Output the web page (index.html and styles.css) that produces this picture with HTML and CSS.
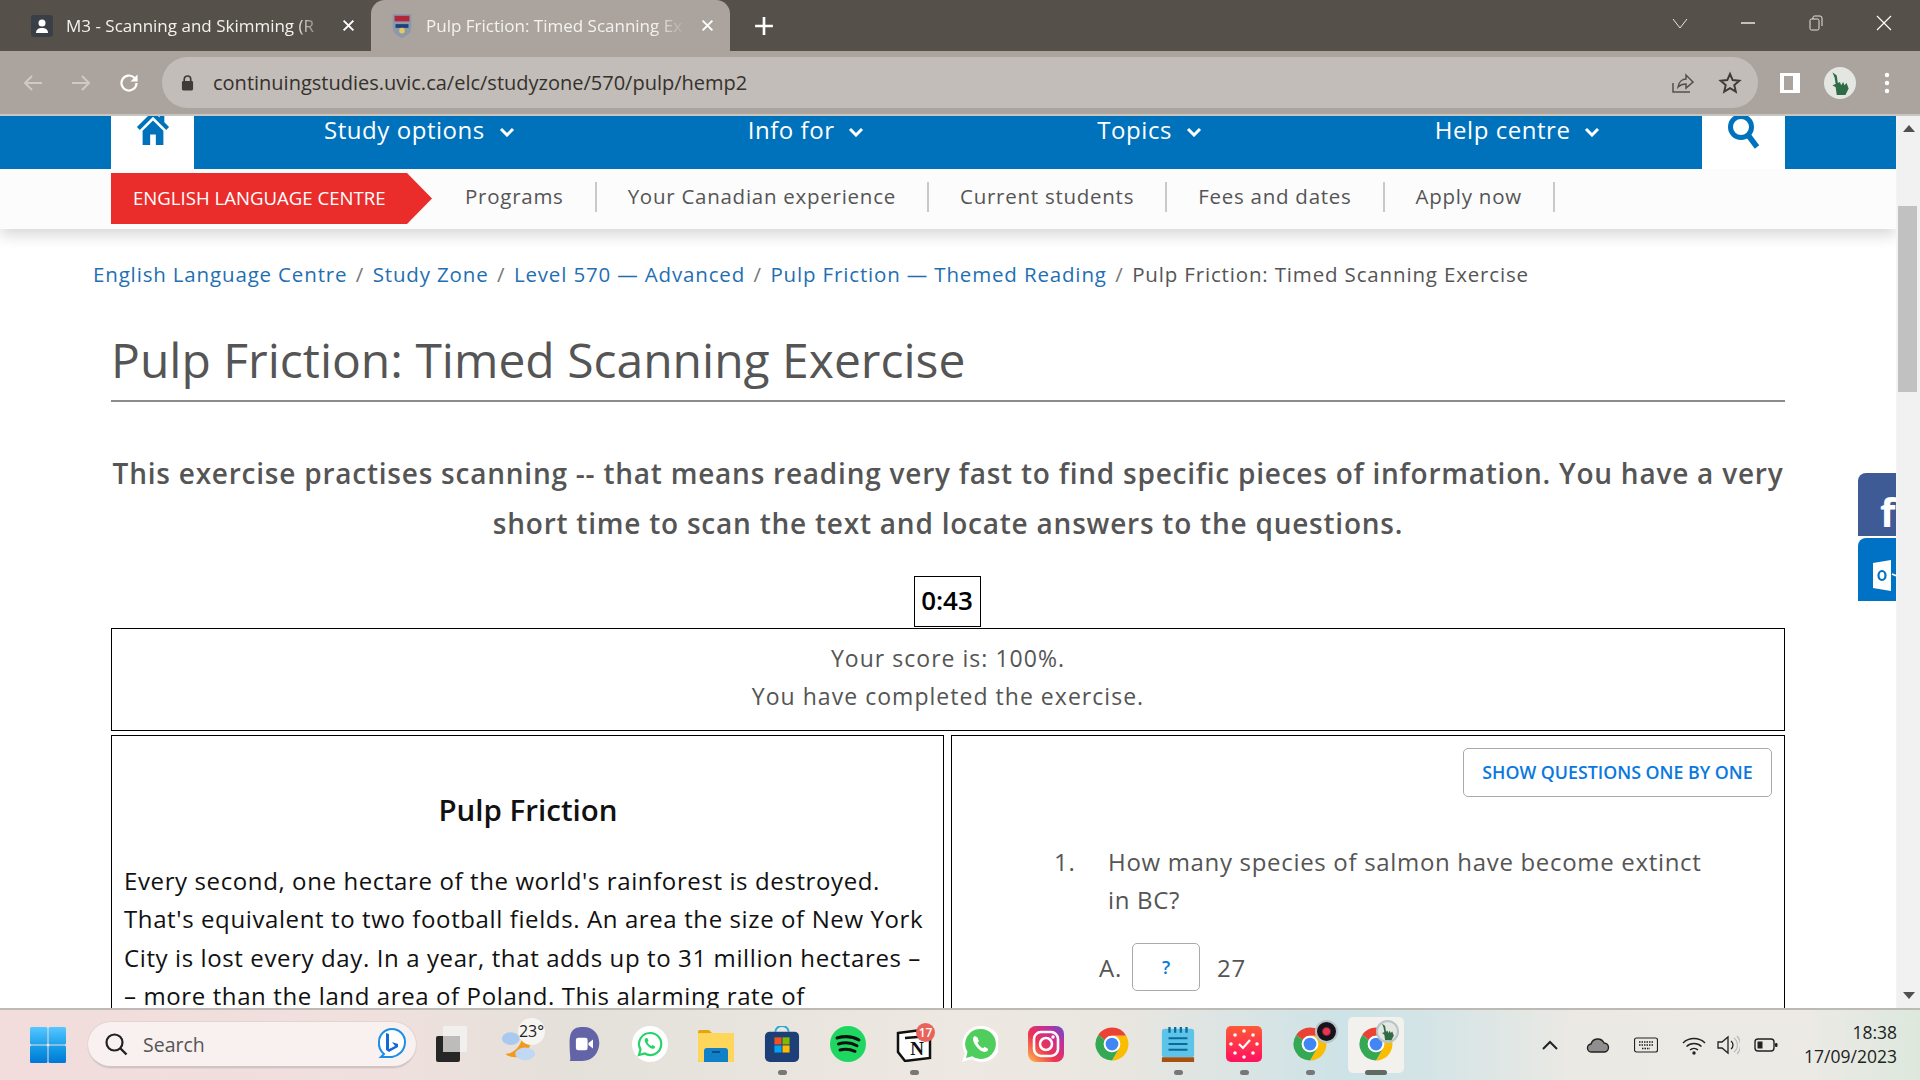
FILE: index.html
```html
<!DOCTYPE html>
<html lang="en">
<head>
<meta charset="utf-8">
<title>Pulp Friction: Timed Scanning Exercise</title>
<link rel="stylesheet" href="styles.css">
</head>
<body>
<svg class="defs" width="0" height="0" aria-hidden="true">
  <symbol id="chrome" viewBox="0 0 48 48">
    <path fill="#ea4335" d="M24 2A22 22 0 0 1 43 13H24A11 11 0 0 0 14.5 18.5L5.600 12A22 22 0 0 1 24 2Z"/>
    <path fill="#fbbc04" d="M43 13A22 22 0 0 1 24 46L33.500 29.500A11 11 0 0 0 33.500 18.500 11 11 0 0 0 24 13Z"/>
    <path fill="#34a853" d="M5.600 12A22 22 0 0 0 24 46L33.500 29.500A11 11 0 0 1 14.500 29.500 11 11 0 0 1 14.500 18.500Z"/>
    <circle cx="24" cy="24" r="11" fill="#fff"/>
    <circle cx="24" cy="24" r="8.500" fill="#4285f4"/>
  </symbol>
  <symbol id="chev" viewBox="0 0 16 10">
    <path d="M2 2l6 6 6-6" fill="none" stroke="currentColor" stroke-width="3"/>
  </symbol>
  <symbol id="dino" viewBox="0 0 24 24">
    <path fill="#2f6b45" d="M5 2l4 3 1 7 2-1 1 3 2-3 1 3 2-2 2 5-3 6H9l-1-7-3-2 3-1-1-6z"/>
  </symbol>
</svg>

<div class="tabbar">
  <div class="tab">
    <svg class="favicon" viewBox="0 0 24 24"><rect x="1" y="1" width="22" height="22" rx="3" fill="#3a3f47"/><circle cx="12" cy="9" r="3.500" fill="#fff"/><path d="M6 19c0-4 3-5 6-5s6 1 6 5z" fill="#fff"/></svg>
    <span class="tab-title">M3 - Scanning and Skimming (R</span>
    <svg class="tab-x" viewBox="0 0 12 12"><path d="M1.500 1.500l9 9M10.500 1.500l-9 9" stroke="#fff" stroke-width="1.800"/></svg>
  </div>
  <div class="tab tab-active">
    <svg class="favicon" viewBox="0 0 24 28"><path d="M2 1h20v15c0 6-5 9-10 11C7 25 2 22 2 16z" fill="#8d99a8"/><rect x="4" y="3" width="16" height="6" fill="#b3263a"/><path d="M5 12h14v4H5z" fill="#1f3f78"/><circle cx="12" cy="19" r="3" fill="#e3c866"/></svg>
    <span class="tab-title">Pulp Friction: Timed Scanning Ex</span>
    <svg class="tab-x" viewBox="0 0 12 12"><path d="M1.500 1.500l9 9M10.500 1.500l-9 9" stroke="#fff" stroke-width="1.800"/></svg>
  </div>
  <svg class="newtab" viewBox="0 0 18 18"><path d="M9 1v16M1 9h16" stroke="#fff" stroke-width="2.400"/></svg>
  <div class="win-controls">
    <svg class="wc" viewBox="0 0 16 16"><path d="M1 4l7 9 7-9" fill="none" stroke="#e8e6e3" stroke-width="1"/></svg>
    <svg class="wc" viewBox="0 0 16 16"><path d="M1 8h14" stroke="#fff" stroke-width="1.300"/></svg>
    <svg class="wc" viewBox="0 0 16 16"><rect x="2" y="4" width="9" height="11" rx="1.500" fill="none" stroke="#e8e6e3"/><path d="M5 4V2.500A1.500 1.500 0 0 1 6.500 1H12a2 2 0 0 1 2 2v8" fill="none" stroke="#e8e6e3"/></svg>
    <svg class="wc" viewBox="0 0 16 16"><path d="M1 1l14 14M15 1L1 15" stroke="#fff" stroke-width="1.200"/></svg>
  </div>
</div>

<div class="toolbar">
  <svg class="tb-ico" viewBox="0 0 24 24"><path d="M21 12H4M11 5l-7 7 7 7" fill="none" stroke="#cfcac5" stroke-width="2"/></svg>
  <svg class="tb-ico" viewBox="0 0 24 24"><path d="M3 12h17M13 5l7 7-7 7" fill="none" stroke="#cfcac5" stroke-width="2"/></svg>
  <svg class="tb-ico" viewBox="0 0 24 24"><path d="M19.500 12a7.500 7.500 0 1 1-2.200-5.300L20 9.500" fill="none" stroke="#fff" stroke-width="2.200"/><path d="M20.500 3.500v7h-7z" fill="#fff"/></svg>
  <div class="omnibox">
    <svg class="lock" viewBox="0 0 14 18"><path d="M3.500 8V5.500a3.500 3.500 0 0 1 7 0V8" fill="none" stroke="#3f3b37" stroke-width="1.800"/><rect x="1" y="7.500" width="12" height="10" rx="1.500" fill="#3f3b37"/></svg>
    <span class="url">continuingstudies.uvic.ca/elc/studyzone/570/pulp/hemp2</span>
    <svg class="omni-ico" viewBox="0 0 24 24"><path d="M3 12v9h17M8 16c1-6 5-8 8-8V4l7 7-7 6v-4c-3 0-6 1-8 3z" fill="none" stroke="#55504b" stroke-width="1.500"/></svg>
    <svg class="omni-ico" viewBox="0 0 24 24"><path d="M12 3l2.700 6.100 6.600.6-5 4.400 1.500 6.500L12 17.200l-5.800 3.400 1.500-6.500-5-4.400 6.600-.6z" fill="none" stroke="#3f3b37" stroke-width="2"/></svg>
  </div>
  <svg class="side-ico" viewBox="0 0 22 22"><rect x="1" y="1" width="20" height="20" fill="#fff"/><rect x="5" y="4" width="9" height="14" fill="#aba49e"/></svg>
  <div class="avatar"><svg viewBox="0 0 24 24"><use href="#dino"/></svg></div>
  <svg class="kebab" viewBox="0 0 6 22"><circle cx="3" cy="3" r="2.200" fill="#fff"/><circle cx="3" cy="11" r="2.200" fill="#fff"/><circle cx="3" cy="19" r="2.200" fill="#fff"/></svg>
</div>

<main class="viewport">
  <div class="page">
    <header class="site-head">
      <nav class="nav">
        <a class="nav-tile">
          <svg class="home" viewBox="0 0 36 36"><path d="M18 0L1 17l3 3L18 6l14 14 3-3-5-5V2h-5v5zM7 21v15h8V25h6v11h8V21L18 10z" fill="#0072bc"/></svg>
        </a>
        <div class="nav-items">
          <a class="nav-item">Study options <svg class="chev"><use href="#chev"/></svg></a>
          <a class="nav-item">Info for <svg class="chev"><use href="#chev"/></svg></a>
          <a class="nav-item">Topics <svg class="chev"><use href="#chev"/></svg></a>
          <a class="nav-item">Help centre <svg class="chev"><use href="#chev"/></svg></a>
        </div>
        <a class="nav-tile">
          <svg class="mag" viewBox="0 0 34 36"><circle cx="14" cy="11" r="10.500" fill="none" stroke="#0072bc" stroke-width="5"/><path d="M21 19l9 12" stroke="#0072bc" stroke-width="5.500"/></svg>
        </a>
      </nav>
      <div class="subnav">
        <div class="subnav-in">
          <span class="badge">ENGLISH LANGUAGE CENTRE</span>
          <a class="sub-link">Programs</a>
          <a class="sub-link">Your Canadian experience</a>
          <a class="sub-link">Current students</a>
          <a class="sub-link">Fees and dates</a>
          <a class="sub-link">Apply now</a>
        </div>
      </div>
    </header>

    <div class="crumbs">
      <a>English Language Centre</a><i>/</i><a>Study Zone</a><i>/</i><a>Level 570 — Advanced</a><i>/</i><a>Pulp Friction — Themed Reading</a><i>/</i><span>Pulp Friction: Timed Scanning Exercise</span>
    </div>

    <div class="container">
      <h1 class="title">Pulp Friction: Timed Scanning Exercise</h1>
      <p class="lead">This exercise practises scanning -- that means reading very fast to find specific pieces of information. You have a very<br>short time to scan the text and locate answers to the questions.</p>
      <div class="timer-row"><span class="timer">0:43</span></div>
      <div class="score">
        <div>Your score is: 100%.</div>
        <div>You have completed the exercise.</div>
      </div>
      <div class="cols">
        <section class="col reading">
          <h2>Pulp Friction</h2>
          <p>Every second, one hectare of the world's rainforest is destroyed. That's equivalent to two football fields. An area the size of New York City is lost every day. In a year, that adds up to 31 million hectares –<br>– more than the land area of Poland. This alarming rate of</p>
        </section>
        <section class="col questions">
          <div class="btn-row"><button class="btn">SHOW QUESTIONS ONE BY ONE</button></div>
          <div class="q"><span class="q-num">1.</span><span class="q-text">How many species of salmon have become extinct in BC?</span></div>
          <div class="answer"><span class="a-letter">A.</span><button class="a-btn">?</button><span>27</span></div>
        </section>
      </div>
    </div>

    <div class="social">
      <div class="soc soc-fb"><span>f</span></div>
      <div class="soc soc-ol">
        <svg viewBox="0 0 30 31"><path d="M0 3L18 0v31L0 28z" fill="#fff"/><path d="M19 14l5 2 6-2" fill="none" stroke="#fff" stroke-width="1.500"/><ellipse cx="9" cy="15.500" rx="3.500" ry="4.500" fill="none" stroke="#0072c6" stroke-width="2.200"/></svg>
      </div>
    </div>
  </div>
  <div class="scrollbar">
    <span class="arrow-up"></span>
    <span class="thumb"></span>
    <span class="arrow-down"></span>
  </div>
</main>

<footer class="taskbar">
  <div class="start">
    <svg viewBox="0 0 36 36"><defs><linearGradient id="w1" x1="0" y1="0" x2="0" y2="1"><stop offset="0" stop-color="#56c7ff"/><stop offset="1" stop-color="#1fa2ea"/></linearGradient><linearGradient id="w2" x1="0" y1="0" x2="0" y2="1"><stop offset="0" stop-color="#18a0ea"/><stop offset="1" stop-color="#0078d4"/></linearGradient></defs><rect width="17.500" height="17.500" rx="1.500" fill="url(#w1)"/><rect x="18.500" width="17.500" height="17.500" rx="1.500" fill="url(#w1)"/><rect y="18.500" width="17.500" height="17.500" rx="1.500" fill="url(#w2)"/><rect x="18.500" y="18.500" width="17.500" height="17.500" rx="1.500" fill="url(#w2)"/></svg>
  </div>
  <div class="search">
    <svg class="s-ico" viewBox="0 0 24 24"><circle cx="10.500" cy="10.500" r="8" fill="none" stroke="#222" stroke-width="2.200"/><path d="M16.500 16.500l6 6" stroke="#222" stroke-width="2.400"/></svg>
    <span>Search</span>
    <svg class="bing" viewBox="0 0 30 34"><path d="M15 2a13 13 0 0 1 13 13c0 9-7 14-13 15H4l3-3a14 14 0 0 1-5-12A13 13 0 0 1 15 2z" fill="#fff" stroke="#1b8ee8" stroke-width="2"/><path d="M12 7v15l6-3-3-4 6 2v3l-9 5-3-2V6z" fill="#1668d8"/></svg>
  </div>
  <div class="apps">
    <div class="app"><svg viewBox="0 0 36 36"><rect x="9" y="0" width="24" height="26" rx="2" fill="#f2f0ee"/><rect x="2" y="10" width="24" height="26" rx="2" fill="#262626"/><rect x="9" y="10" width="17" height="16" fill="#bdbcbb"/></svg></div>
    <div class="app app-weather">
      <svg viewBox="0 0 40 40"><path d="M26 4a16 16 0 0 1 2 26c-6 6-16 6-22 1 10 0 20-10 20-27z" fill="#f39a1e"/><ellipse cx="12" cy="14" rx="10" ry="7" fill="#a9c9ef"/><ellipse cx="28" cy="31" rx="11" ry="7" fill="#c0d8f3"/></svg>
      <span class="temp">23°</span>
    </div>
    <div class="app"><svg viewBox="0 0 36 40"><path d="M18 1c10 0 17 8 17 18s-7 20-19 20H2c2-2 0-4 0-20S8 1 18 1z" fill="#6264a7"/><rect x="9" y="13" width="13" height="14" rx="2.500" fill="#fff"/><path d="M23 19l5-4v10l-5-4z" fill="#fff"/></svg></div>
    <div class="app"><svg viewBox="0 0 36 36"><circle cx="18" cy="18" r="18" fill="#fff"/><path d="M18 7a11 11 0 0 0-9.500 16.500L7 29l5.700-1.500A11 11 0 1 0 18 7z" fill="none" stroke="#25d366" stroke-width="2.200"/><path d="M14 12c-2 1-1.500 4 1 7s5 4.500 7 3.500c1-.6 1.300-1.500 1-2l-2.500-1.500-1 1c-2-.8-3.500-2.500-4-4l1-1-1-2.700z" fill="#25d366"/></svg></div>
    <div class="app"><svg viewBox="0 0 36 36"><path d="M0 6a2 2 0 0 1 2-2h9l3 3h20a2 2 0 0 1 2 2v27H0z" fill="#e3a60c"/><rect y="7" width="36" height="29" rx="1" fill="#ffd65c"/><path d="M6 36V25a3 3 0 0 1 3-3h18a3 3 0 0 1 3 3v11z" fill="#1080c8"/><rect x="14" y="25" width="8" height="2" fill="#0b4f86"/></svg></div>
    <div class="app app-dot"><svg viewBox="0 0 36 38"><path d="M11 6a7 6 0 0 1 14 0" fill="none" stroke="#22a7e0" stroke-width="2"/><rect y="6" width="36" height="32" rx="5" fill="#1c3f78"/><rect x="10" y="12" width="7.500" height="7.500" fill="#f25022"/><rect x="18.500" y="12" width="7.500" height="7.500" fill="#7fba00"/><rect x="10" y="20.500" width="7.500" height="7.500" fill="#00a4ef"/><rect x="18.500" y="20.500" width="7.500" height="7.500" fill="#ffb900"/></svg></div>
    <div class="app"><svg viewBox="0 0 36 36"><ellipse cx="18" cy="18" rx="18" ry="18" fill="#1ed760"/><path d="M7 12c7-2 15-2 22 2M8.500 18c6-1.800 13-1.300 18.500 1.800M10 24c5-1.300 10-.9 15 1.300" fill="none" stroke="#111" stroke-width="3" stroke-linecap="round"/></svg></div>
    <div class="app app-dot app-notion">
      <svg viewBox="0 0 36 36"><path d="M2 7L25 4l9 6v22l-25 3-7-9z" fill="#fff" stroke="#111" stroke-width="2.500"/><path d="M9 12l25-2" stroke="#111" stroke-width="2.500"/><text x="21" y="29" text-anchor="middle" class="notion-n">N</text></svg>
      <span class="notif">17</span>
    </div>
    <div class="app"><svg viewBox="0 0 36 36"><path d="M18 0a18 18 0 0 0-15 27L0 36l10-3A18 18 0 1 0 18 0z" fill="#fff"/><path d="M18 3a15 15 0 0 0-12.500 23L4 32l6.300-1.700A15 15 0 1 0 18 3z" fill="#4fce5d"/><path d="M13 10c-3 1-2.500 5 1 10s8 7 10.500 5.500c1.500-.8 1.700-2 1.400-2.800l-3.400-2-1.400 1.500c-2.800-1.200-4.800-3.500-5.600-5.500l1.400-1.500-1.400-3.700z" fill="#fff"/></svg></div>
    <div class="app"><svg viewBox="0 0 36 36"><defs><linearGradient id="ig" x1="0" y1="1" x2="1" y2="0"><stop offset="0" stop-color="#fdc14a"/><stop offset=".4" stop-color="#f0334f"/><stop offset=".75" stop-color="#c02f9c"/><stop offset="1" stop-color="#5b52cf"/></linearGradient></defs><rect width="36" height="36" rx="8" fill="url(#ig)"/><rect x="6" y="6" width="24" height="24" rx="7" fill="none" stroke="#fff" stroke-width="2.600"/><circle cx="18" cy="18" r="6" fill="none" stroke="#fff" stroke-width="2.600"/><circle cx="25" cy="11" r="1.700" fill="#fff"/></svg></div>
    <div class="app"><svg class="chrome-ico"><use href="#chrome"/></svg></div>
    <div class="app app-dot"><svg viewBox="0 0 36 38"><rect x="1" y="3" width="34" height="30" rx="3" fill="#5cc4e8"/><path d="M9 1v6M15 1v6M21 1v6M27 1v6" stroke="#0c6a98" stroke-width="2.400"/><path d="M8 13h20M8 19h20M8 25h20" stroke="#0c6a98" stroke-width="2.200"/><rect x="1" y="33" width="34" height="5" fill="#a85010"/></svg></div>
    <div class="app app-dot"><svg viewBox="0 0 36 36"><defs><linearGradient id="cl" x1="0" y1="0" x2="0" y2="1"><stop offset="0" stop-color="#ff5a35"/><stop offset="1" stop-color="#ff1160"/></linearGradient></defs><rect width="36" height="36" rx="5" fill="url(#cl)"/><path d="M13 18l4 4 7-8" fill="none" stroke="#fff" stroke-width="2.200"/><g fill="#fff"><circle cx="18" cy="5" r="1.800"/><circle cx="18" cy="31" r="1.800"/><circle cx="5" cy="18" r="1.800"/><circle cx="31" cy="18" r="1.800"/><circle cx="9" cy="9" r="1.800"/><circle cx="27" cy="9" r="1.800"/><circle cx="9" cy="27" r="1.800"/><circle cx="27" cy="27" r="1.800"/></g></svg></div>
    <div class="app app-dot"><svg class="chrome-ico"><use href="#chrome"/></svg><span class="mini mini-dark"></span></div>
    <div class="app app-dot app-active"><svg class="chrome-ico"><use href="#chrome"/></svg><span class="mini"><svg viewBox="0 0 24 24"><use href="#dino"/></svg></span></div>
  </div>
  <div class="tray">
    <svg class="t-ico" viewBox="0 0 24 24"><path d="M5 16l7-7 7 7" fill="none" stroke="#222" stroke-width="2"/></svg>
    <svg class="t-ico" viewBox="0 0 24 24"><path d="M6 19a4 4 0 0 1-1-8 7 7 0 0 1 13-1 4.500 4.500 0 0 1 0 9z" fill="#8f8f8f" stroke="#222" stroke-width="1.400"/></svg>
    <svg class="t-ico" viewBox="0 0 24 24"><rect x="0.500" y="5" width="23" height="14" rx="2" fill="none" stroke="#222" stroke-width="1.200"/><path d="M5 9h14M5 12h14M8 15.500h8" stroke="#222" stroke-width="1.300" stroke-dasharray="1.500 1"/></svg>
    <svg class="t-ico t-wifi" viewBox="0 0 24 24"><path d="M1 10a16 16 0 0 1 22 0M4.500 13.500a11 11 0 0 1 15 0M8 17a6 6 0 0 1 8 0" fill="none" stroke="#222" stroke-width="1.500"/><circle cx="12" cy="20" r="1.700" fill="#222"/></svg>
    <svg class="t-ico t-vol" viewBox="0 0 24 24"><path d="M2 9h4l6-5v16l-6-5H2z" fill="none" stroke="#222" stroke-width="1.300"/><path d="M15 8a5 5 0 0 1 0 8" fill="none" stroke="#222" stroke-width="1.300"/><path d="M18 5a9 9 0 0 1 0 14M21 3a13 13 0 0 1 0 18" fill="none" stroke="#bbb" stroke-width="1.200"/></svg>
    <svg class="t-ico" viewBox="0 0 24 24"><rect x="1" y="6" width="19" height="12" rx="3" fill="none" stroke="#222" stroke-width="1.400"/><rect x="3.500" y="8.500" width="5" height="7" fill="#222"/><rect x="21" y="10" width="2.500" height="4" rx="1" fill="#222"/></svg>
    <div class="clock"><div>18:38</div><div>17/09/2023</div></div>
  </div>
</footer>
</body>
</html>
```

FILE: styles.css
```css
* { box-sizing: border-box; }
html, body { height: 100%; margin: 0; }
body {
  display: flex;
  flex-direction: column;
  height: 1080px;
  overflow: hidden;
  font-family: "Open Sans", "Noto Sans", sans-serif;
  color: #555;
  background: #fff;
}
.defs { position: absolute; }
a { color: inherit; text-decoration: none; }

/* browser frame */
.tabbar {
  height: 51px;
  flex: none;
  background: #555049;
  display: flex;
  align-items: stretch;
  padding-left: 8px;
  color: #fff;
}
.tab {
  width: 363px;
  display: flex;
  align-items: center;
  padding: 0 16px 0 22px;
  font-size: 17px;
}
.tab-active {
  width: 359px;
  padding-left: 19px;
  margin-left: 0;
  background: #aba49e;
  border-radius: 14px 14px 0 0;
}
.favicon { width: 24px; height: 26px; flex: none; }
.tab-title {
  flex: 1;
  margin-left: 12px;
  white-space: nowrap;
  overflow: hidden;
  color: #f4f2f0;
  -webkit-mask-image: linear-gradient(90deg, #000 86%, transparent 98%);
  mask-image: linear-gradient(90deg, #000 86%, transparent 98%);
}
.tab-x { width: 13px; height: 13px; flex: none; margin-left: 10px; }
.newtab { width: 20px; height: 20px; align-self: center; margin-left: 24px; }
.win-controls {
  margin-left: auto;
  display: flex;
  align-items: center;
  gap: 52px;
  padding: 0 28px 6px 0;
}
.wc { width: 16px; height: 16px; }

.toolbar {
  height: 65px;
  flex: none;
  background: #aba49e;
  border-bottom: 2px solid #c9c5c1;
  display: flex;
  align-items: center;
  padding: 0 0 0 21px;
}
.tb-ico { width: 24px; height: 24px; margin-right: 24px; flex: none; }
.tb-ico:nth-child(3) { margin-right: 21px; }
.omnibox {
  width: 1596px;
  height: 51px;
  flex: none;
  background: #c2bdb8;
  border-radius: 26px;
  display: flex;
  align-items: center;
  padding: 0 16px 0 19px;
  color: #35312d;
}
.lock { width: 13px; height: 17px; flex: none; }
.url { margin-left: 19px; font-size: 20px; flex: 1; }
.omni-ico { width: 24px; height: 24px; margin-left: 24px; flex: none; }
.side-ico { width: 22px; height: 22px; margin-left: 21px; flex: none; }
.avatar {
  width: 32px; height: 32px;
  margin-left: 23px;
  border-radius: 50%;
  background: #e4e6e2;
  display: flex; align-items: center; justify-content: center;
  flex: none;
}
.avatar svg { width: 26px; height: 26px; }
.kebab { width: 6px; height: 22px; margin-left: 28px; flex: none; }

/* page */
.viewport {
  flex: 1;
  min-height: 0;
  display: flex;
  overflow: hidden;
}
.page {
  width: 1896px;
  flex: none;
  position: relative;
  overflow: hidden;
}
.site-head { box-shadow: 0 6px 14px rgba(0,0,0,.16); position: relative; background: #fcfcfc; }
.nav {
  height: 53px;
  background: #0072bc;
  display: flex;
  padding: 0 111px;
  color: #fff;
}
.nav-tile {
  width: 83px;
  flex: none;
  background: #fff;
  display: flex;
  justify-content: center;
}
.home { width: 34px; height: 34px; margin-top: -5px; }
.mag { width: 34px; height: 36px; margin-top: 0; }
.nav-items {
  flex: 1;
  display: flex;
  gap: 233px;
  padding-left: 130px;
}
.nav-item {
  font-size: 24px;
  letter-spacing: .55px;
  line-height: 28px;
  padding-top: 0;
  white-space: nowrap;
}
.chev { width: 16px; height: 10px; margin-left: 7px; vertical-align: 2px; }
.subnav { height: 60px; background: #fcfcfc; padding: 4px 111px 0; }
.subnav-in { display: flex; align-items: flex-start; }
.badge {
  width: 321px;
  height: 51px;
  flex: none;
  background: #ea2d2b;
  color: #fff;
  font-size: 18.600px;
  line-height: 49px;
  padding-left: 22px;
  white-space: nowrap;
  clip-path: polygon(0 0, 296px 0, 100% 50%, 296px 100%, 0 100%);
}
.sub-link {
  margin-top: 9px;
  height: 30px;
  line-height: 28px;
  font-size: 20.500px;
  letter-spacing: .74px;
  padding: 0 31px;
  border-right: 2px solid #c9c9c9;
  white-space: nowrap;
  color: #555;
}
.badge + .sub-link { padding-left: 33px; }

.crumbs {
  margin-top: 31px;
  padding-left: 93px;
  font-size: 20.500px;
  line-height: 28px;
  letter-spacing: .84px;
  color: #555;
  white-space: nowrap;
}
.crumbs a { color: #1f6fb2; }
.crumbs i { font-style: normal; margin: 0 8.500px; color: #777; }

.container { margin: 0 111px; }
.title {
  margin: 40px 0 0;
  font-size: 48px;
  line-height: 64px;
  font-weight: 400;
  color: #555;
  padding-bottom: 8px;
  border-bottom: 2px solid #8c8c8c;
}
.lead {
  margin: 46px 0 0;
  font-size: 28px;
  line-height: 50px;
  font-weight: 600;
  text-align: center;
  letter-spacing: .77px;
  color: #555;
}
.timer-row { display: flex; justify-content: center; margin-top: 28px; padding-right: 2px; }
.timer {
  width: 67px;
  height: 51px;
  border: 1px solid #000;
  display: flex;
  align-items: center;
  justify-content: center;
  padding-bottom: 3px;
  font-size: 26px;
  font-weight: 600;
  color: #000;
}
.score {
  margin-top: 1px;
  height: 103px;
  border: 1px solid #000;
  text-align: center;
  font-size: 23px;
  line-height: 38px;
  letter-spacing: 1.030px;
  padding-top: 10px;
  color: #555;
}
.cols { display: flex; gap: 7px; margin-top: 4px; }
.col { border: 1px solid #000; height: 400px; }
.reading { width: 833px; padding: 49px 11px 0 12px; color: #111; }
.reading h2 {
  margin: 0;
  font-size: 29.500px;
  line-height: 50px;
  font-weight: 600;
  text-align: center;
  color: #111;
}
.reading p {
  margin: 27px 0 0;
  font-size: 24px;
  line-height: 38.400px;
  letter-spacing: .61px;
}
.questions { flex: 1; padding: 12px 12px 0 0; }
.btn-row { display: flex; justify-content: flex-end; }
.btn {
  width: 309px;
  height: 49px;
  padding-bottom: 3px;
  background: #fff;
  border: 1px solid #aaa;
  border-radius: 5px;
  color: #0a78e0;
  font: 600 17.800px "Open Sans", sans-serif;
}
.q {
  display: flex;
  margin-top: 46px;
  padding: 0 50px 0 102px;
  font-size: 24px;
  line-height: 38px;
  letter-spacing: .68px;
}
.q-num { width: 54px; flex: none; }
.answer {
  display: flex;
  align-items: center;
  margin-top: 24px;
  padding-left: 147px;
  font-size: 24px;
  letter-spacing: .8px;
}
.a-letter { width: 33px; }
.a-btn {
  width: 68px;
  height: 48px;
  margin-right: 17px;
  background: #fff;
  border: 1px solid #aaa;
  border-radius: 5px;
  color: #0a78e0;
  font: 600 18px "Open Sans", sans-serif;
}

.social {
  position: absolute;
  right: 0;
  top: 357px;
  width: 38px;
  display: flex;
  flex-direction: column;
  gap: 2px;
  overflow: hidden;
}
.soc {
  height: 63px;
  border-radius: 8px 0 0 0;
  overflow: hidden;
}
.soc-fb {
  background: #3f5b96;
  color: #fff;
  font: 700 40px/78px "Open Sans", sans-serif;
  padding-left: 22px;
}
.soc-ol { background: #0072c6; padding: 22px 0 0 15px; }
.soc-ol svg { width: 30px; height: 31px; display: block; }

.scrollbar {
  flex: 1;
  background: #f1f1f1;
  position: relative;
  border-left: 1px solid #f4f4f4;
}
.thumb {
  position: absolute;
  left: 1px; right: 3px;
  top: 90px;
  height: 186px;
  background: #c1c1c1;
}
.arrow-up, .arrow-down {
  position: absolute;
  left: 6px;
  width: 0; height: 0;
  border-left: 6px solid transparent;
  border-right: 6px solid transparent;
}
.arrow-up { top: 9px; border-bottom: 7px solid #505050; }
.arrow-down { bottom: 9px; border-top: 7px solid #505050; }

/* taskbar */
.taskbar {
  height: 72px;
  flex: none;
  border-top: 2px solid #bdbab6;
  background: linear-gradient(90deg, #f2dcdc 0, #efe0de 20%, #e4e0da 30%, #ede8e2 50%, #eae6e0 58%, #cde3e7 70%, #d3e4e6 74%, #ebe9e4 82%, #eceae5 94%, #dde8dd 100%);
  display: flex;
  align-items: center;
  position: relative;
}
.start { width: 88px; flex: none; padding-left: 30px; display: flex; }
.start svg { width: 36px; height: 36px; }
.search {
  width: 328px;
  height: 46px;
  flex: none;
  background: #f8f1f0;
  border-radius: 23px;
  border-bottom: 2px solid #d2c4c4;
  box-shadow: 0 0 0 1px #e4d5d5;
  display: flex;
  align-items: center;
  padding: 0 9px 0 16px;
  font-size: 19.500px;
  color: #555;
}
.s-ico { width: 24px; height: 24px; margin-right: 15px; }
.bing { width: 30px; height: 34px; margin-left: auto; }
.apps { display: flex; margin-left: 3px; flex: none; }
.app {
  width: 66px;
  height: 56px;
  flex: none;
  display: flex;
  align-items: center;
  justify-content: center;
  position: relative;
  padding-bottom: 2px;
}
.app > svg { width: 36px; height: 36px; }
.app-dot::after {
  content: "";
  position: absolute;
  bottom: -2px;
  left: 50%;
  width: 9px;
  height: 5px;
  margin-left: -4px;
  background: #777;
  border-radius: 3px;
}
.app-active { width: 56px; margin-left: 5px; background: #f2f1ee; border-radius: 5px; }
.app-active::after { width: 22px; margin-left: -11px; background: #5f6a60; }
.temp {
  position: absolute;
  top: 1px;
  left: 33px;
  width: 27px;
  height: 27px;
  border-radius: 50%;
  background: #f7f5f2;
  color: #222;
  font-size: 16px;
  line-height: 27px;
  text-align: center;
}
.notion-n { font: 700 19px "Liberation Serif", serif; fill: #111; }
.notif {
  position: absolute;
  top: 6px;
  left: 35px;
  width: 19px;
  height: 19px;
  border-radius: 50%;
  background: #e8635a;
  color: #fff;
  font-size: 12px;
  font-weight: 600;
  line-height: 19px;
  text-align: center;
}
.chrome-ico { width: 36px; height: 36px; }
.mini {
  position: absolute;
  top: 3px;
  right: 5px;
  width: 23px;
  height: 23px;
  border-radius: 50%;
  background: #e4e6e2;
  border: 2px solid #b9c4c8;
  display: flex;
}
.mini svg { width: 100%; height: 100%; }
.mini-dark { background: radial-gradient(circle, #e8364f 0 3px, #15131c 5px); }
.tray {
  margin-left: auto;
  display: flex;
  align-items: center;
  padding-right: 23px;
  color: #222;
}
.t-ico { width: 24px; height: 24px; margin-right: 24px; flex: none; }
.t-wifi { margin-right: 10px; }
.t-vol { margin-right: 14px; }
.clock { margin: 0 0 3px 2px; text-align: right; font-size: 17.500px; line-height: 24px; }
```
